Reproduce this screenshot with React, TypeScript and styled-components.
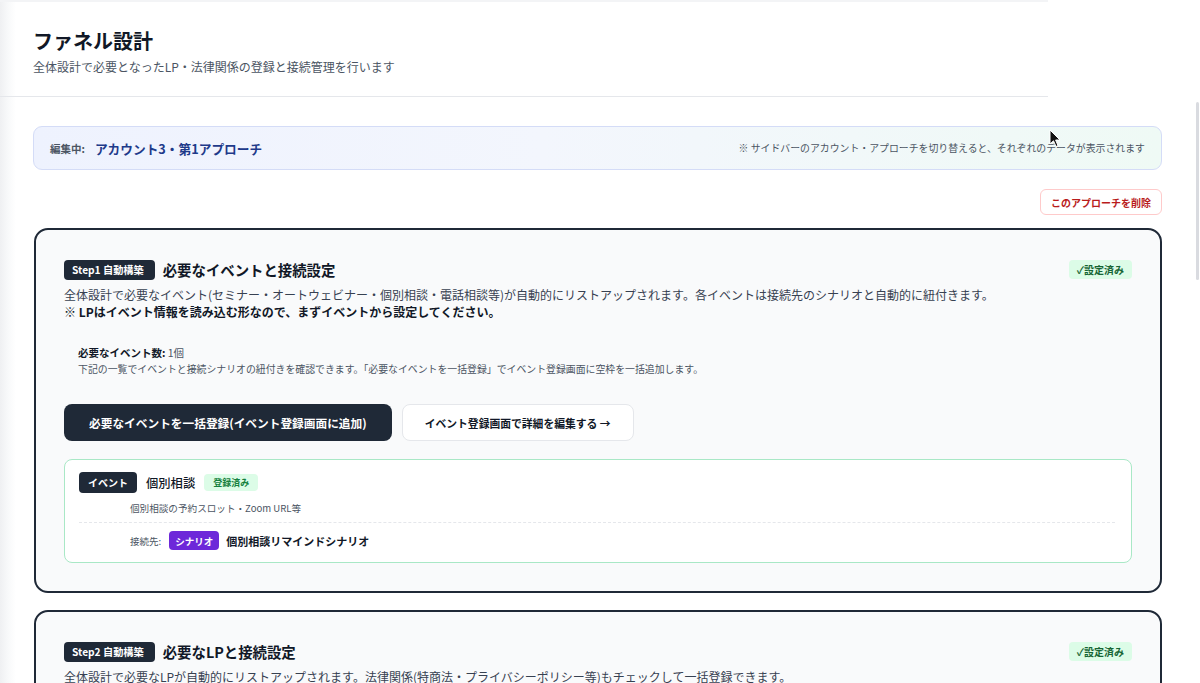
import React from "react";
import styled, { createGlobalStyle } from "styled-components";

const GlobalStyle = createGlobalStyle`
  html, body {
    margin: 0;
    padding: 0;
    height: 683px;
    overflow: hidden;
  }
  body {
    font-family: "Noto Sans CJK JP", "Noto Sans", sans-serif;
    color: #111827;
    background: linear-gradient(90deg, #eff0f2 0px, #f8f9fa 8px, #ffffff 16px);
  }
  * { box-sizing: border-box; }
`;

const Page = styled.div`
  position: relative;
  width: 1200px;
  height: 683px;
  overflow: hidden;
`;

const Header = styled.header`
  width: 1048px;
  padding: 26px 33px 20px;
  border-top: 2px solid #f3f4f6;
  border-bottom: 1px solid #e5e7eb;
`;

const Title = styled.h1`
  margin: 0;
  font-size: 20px;
  line-height: 26px;
  font-weight: 700;
  color: #111827;
`;

const Subtitle = styled.p`
  margin: 4px 0 0;
  font-size: 12px;
  line-height: 18px;
  color: #4b5563;
`;

const Main = styled.main`
  width: 1129px;
  margin-left: 33px;
  padding-top: 29px;
  display: flex;
  flex-direction: column;
`;

const Banner = styled.div`
  height: 44px;
  display: flex;
  align-items: center;
  justify-content: space-between;
  padding: 0 16px;
  border: 1px solid #d4dcf7;
  border-radius: 9px;
  background: linear-gradient(90deg, #eef2fe 0%, #f3f6fd 45%, #effaf5 100%);
`;

const BannerLeft = styled.div`
  display: flex;
  align-items: center;
  gap: 10px;
`;

const EditingLabel = styled.span`
  font-size: 10.5px;
  font-weight: 700;
  color: #4b5563;
`;

const EditingName = styled.span`
  font-size: 12.7px;
  font-weight: 700;
  color: #1e3a8a;
`;

const BannerNote = styled.span`
  font-size: 9.9px;
  color: #4b5563;
`;

const Actions = styled.div`
  display: flex;
  justify-content: flex-end;
  margin-top: 19px;
`;

const DeleteButton = styled.button`
  height: 26px;
  padding: 0 10px;
  border: 1px solid #fecaca;
  border-radius: 6px;
  background: #ffffff;
  color: #b91c1c;
  font-family: inherit;
  font-size: 10px;
  font-weight: 700;
`;

const StepCard = styled.section<{ $first?: boolean }>`
  margin-top: ${(p) => (p.$first ? "13px" : "17px")};
  margin-left: 1px;
  border: 2px solid #1f2937;
  border-radius: 14px;
  background: #f9fafb;
  padding: 29px 28px 28px;
  display: flex;
  flex-direction: column;
`;

const StepHeader = styled.div`
  display: flex;
  align-items: center;
  justify-content: space-between;
`;

const StepTitleGroup = styled.div`
  display: flex;
  align-items: center;
  gap: 8px;
`;

const StepBadge = styled.span`
  display: inline-flex;
  align-items: center;
  height: 20px;
  padding: 0 11px 0 8px;
  border-radius: 4px;
  background: #1f2937;
  color: #ffffff;
  font-size: 10.2px;
  font-weight: 700;
`;

const StepTitle = styled.h2`
  margin: 0;
  font-size: 14.4px;
  font-weight: 700;
  color: #111827;
`;

const DoneBadge = styled.span`
  display: inline-flex;
  align-items: center;
  height: 19px;
  padding: 0 8px;
  border-radius: 4px;
  background: #dcfce7;
  color: #166534;
  font-size: 10px;
  font-weight: 700;
`;

const Desc = styled.div`
  margin-top: 6px;
  font-size: 12px;
  line-height: 17px;
  color: #374151;
`;

const DescStrong = styled.div`
  font-weight: 700;
  color: #111827;
`;

const InfoBox = styled.div`
  margin-top: 11px;
  padding: 14px 14px;
`;

const InfoLine = styled.div`
  font-size: 10.5px;
  line-height: 16px;
  color: #111827;
`;

const InfoLabel = styled.span`
  font-weight: 700;
`;

const InfoCount = styled.span`
  color: #4b5563;
`;

const InfoSub = styled.div`
  font-size: 9.9px;
  line-height: 17px;
  color: #4b5563;
`;

const ButtonRow = styled.div`
  display: flex;
  gap: 10px;
  margin-top: 12px;
`;

const PrimaryButton = styled.button`
  height: 37px;
  padding: 0 25px;
  border: none;
  border-radius: 8px;
  background: #1f2937;
  color: #ffffff;
  font-family: inherit;
  font-size: 11.7px;
  font-weight: 700;
`;

const SecondaryButton = styled.button`
  height: 37px;
  padding: 0 22px;
  border: 1px solid #e5e7eb;
  border-radius: 8px;
  background: #ffffff;
  color: #111827;
  font-family: inherit;
  font-size: 10.8px;
  font-weight: 700;
`;

const EventCard = styled.div`
  margin-top: 18px;
  border: 1px solid #a9e8c6;
  border-radius: 8px;
  background: #ffffff;
  padding: 12px 16px 12px 14px;
`;

const EventRow = styled.div`
  display: flex;
  align-items: center;
  gap: 9px;
  height: 21px;
`;

const KindBadge = styled.span`
  display: inline-flex;
  align-items: center;
  height: 21px;
  padding: 0 9px;
  border-radius: 4px;
  background: #1f2937;
  color: #ffffff;
  font-size: 10px;
  font-weight: 700;
`;

const EventName = styled.span`
  font-size: 12.3px;
  font-weight: 500;
  color: #111827;
`;

const RegisteredBadge = styled.span`
  display: inline-flex;
  align-items: center;
  height: 17px;
  padding: 0 9px;
  border-radius: 4px;
  background: #dcfce7;
  color: #15803d;
  font-size: 9px;
  font-weight: 700;
`;

const EventDesc = styled.div`
  margin-top: 8px;
  padding: 0 0 7px 51px;
  border-bottom: 1px dashed #e5e7eb;
  font-size: 9.6px;
  line-height: 14px;
  color: #4b5563;
`;

const ConnectRow = styled.div`
  display: flex;
  align-items: center;
  gap: 8px;
  padding: 8px 0 0 51px;
`;

const ConnectLabel = styled.span`
  font-size: 9.5px;
  color: #4b5563;
`;

const ScenarioBadge = styled.span`
  display: inline-flex;
  align-items: center;
  height: 19px;
  padding: 0 6px;
  border-radius: 4px;
  background: #6d28d9;
  color: #ffffff;
  font-size: 9.5px;
  font-weight: 700;
`;

const ScenarioName = styled.span`
  margin-left: -1px;
  font-size: 11px;
  font-weight: 700;
  color: #111827;
`;

const ScrollThumb = styled.div`
  position: absolute;
  right: 1px;
  top: 102px;
  width: 3px;
  height: 178px;
  border-radius: 2px;
  background: #d9dbe0;
`;

const Cursor = styled.svg`
  position: absolute;
  left: 1049px;
  top: 129px;
`;

export default function App() {
  return (
    <Page>
      <GlobalStyle />
      <Header>
        <Title>ファネル設計</Title>
        <Subtitle>全体設計で必要となったLP・法律関係の登録と接続管理を行います</Subtitle>
      </Header>
      <Main>
        <Banner>
          <BannerLeft>
            <EditingLabel>編集中:</EditingLabel>
            <EditingName>アカウント3・第1アプローチ</EditingName>
          </BannerLeft>
          <BannerNote>※ サイドバーのアカウント・アプローチを切り替えると、それぞれのデータが表示されます</BannerNote>
        </Banner>
        <Actions>
          <DeleteButton>このアプローチを削除</DeleteButton>
        </Actions>

        <StepCard $first>
          <StepHeader>
            <StepTitleGroup>
              <StepBadge>Step1 自動構築</StepBadge>
              <StepTitle>必要なイベントと接続設定</StepTitle>
            </StepTitleGroup>
            <DoneBadge>✓設定済み</DoneBadge>
          </StepHeader>
          <Desc>
            全体設計で必要なイベント(セミナー・オートウェビナー・個別相談・電話相談等)が自動的にリストアップされます。各イベントは接続先のシナリオと自動的に紐付きます。
            <DescStrong>※ LPはイベント情報を読み込む形なので、まずイベントから設定してください。</DescStrong>
          </Desc>
          <InfoBox>
            <InfoLine>
              <InfoLabel>必要なイベント数: </InfoLabel>
              <InfoCount>1個</InfoCount>
            </InfoLine>
            <InfoSub>
              下記の一覧でイベントと接続シナリオの紐付きを確認できます。「必要なイベントを一括登録」でイベント登録画面に空枠を一括追加します。
            </InfoSub>
          </InfoBox>
          <ButtonRow>
            <PrimaryButton>必要なイベントを一括登録(イベント登録画面に追加)</PrimaryButton>
            <SecondaryButton>イベント登録画面で詳細を編集する →</SecondaryButton>
          </ButtonRow>
          <EventCard>
            <EventRow>
              <KindBadge>イベント</KindBadge>
              <EventName>個別相談</EventName>
              <RegisteredBadge>登録済み</RegisteredBadge>
            </EventRow>
            <EventDesc>個別相談の予約スロット・Zoom URL等</EventDesc>
            <ConnectRow>
              <ConnectLabel>接続先:</ConnectLabel>
              <ScenarioBadge>シナリオ</ScenarioBadge>
              <ScenarioName>個別相談リマインドシナリオ</ScenarioName>
            </ConnectRow>
          </EventCard>
        </StepCard>

        <StepCard>
          <StepHeader>
            <StepTitleGroup>
              <StepBadge>Step2 自動構築</StepBadge>
              <StepTitle>必要なLPと接続設定</StepTitle>
            </StepTitleGroup>
            <DoneBadge>✓設定済み</DoneBadge>
          </StepHeader>
          <Desc>
            全体設計で必要なLPが自動的にリストアップされます。法律関係(特商法・プライバシーポリシー等)もチェックして一括登録できます。
          </Desc>
        </StepCard>
      </Main>
      <ScrollThumb />
      <Cursor width="12" height="19" viewBox="0 0 12 19">
        <path d="M1 1 L1 15 L4.5 11.8 L7 17.5 L9 16.6 L6.6 11 L11 11 Z" fill="#111" stroke="#fff" strokeWidth="1" />
      </Cursor>
    </Page>
  );
}
